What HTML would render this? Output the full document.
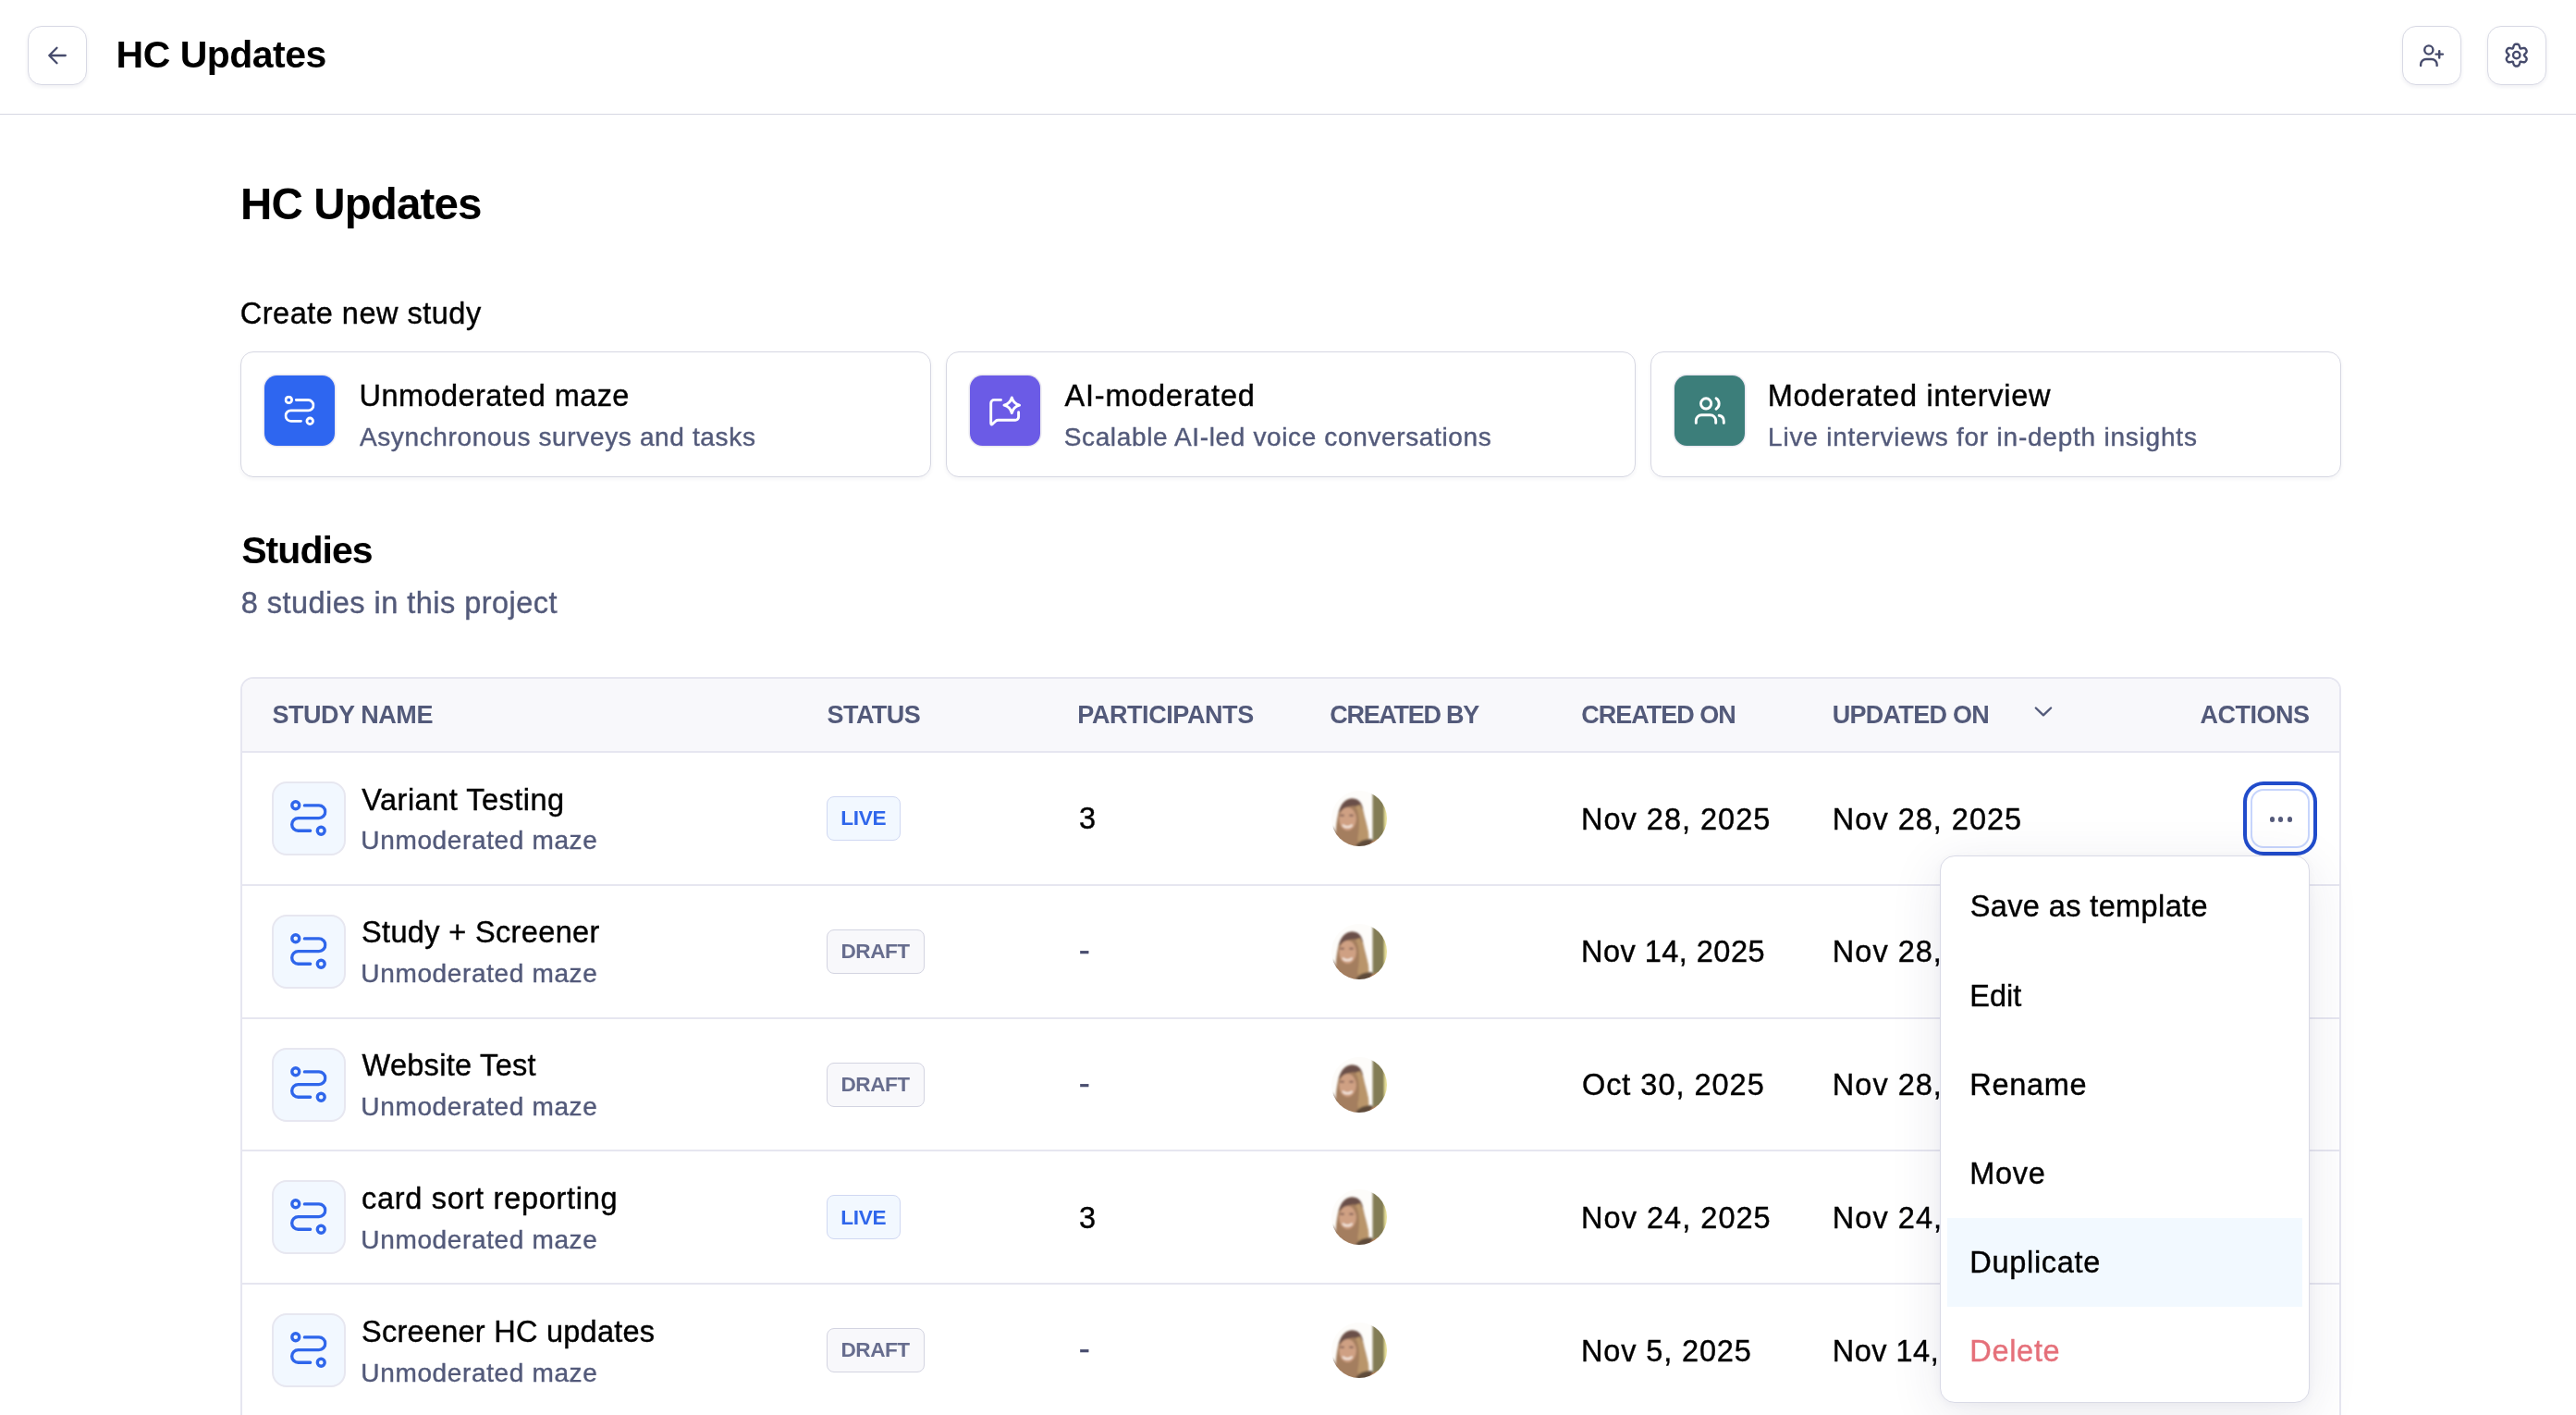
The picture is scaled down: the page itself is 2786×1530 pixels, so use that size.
<!DOCTYPE html>
<html lang="en">
<head>
<meta charset="utf-8">
<title>HC Updates</title>
<style>
*{box-sizing:border-box;margin:0;padding:0}
html,body{width:2786px;height:1530px;overflow:hidden;background:#fff}
body{font-family:"Liberation Sans",Arial,sans-serif;color:#000;position:relative}
#app{position:absolute;left:0;top:0;width:2786px;height:1530px;will-change:transform}
button{font:inherit;color:inherit;cursor:pointer}
.t{position:absolute;white-space:nowrap;line-height:1;display:block;font-weight:normal;-webkit-text-stroke:.4px}
.t.b{-webkit-text-stroke:0}
header{position:absolute;left:0;top:0;width:2786px;height:124px;border-bottom:1px solid #D6D7E3;background:#fff}
.ibtn{position:absolute;top:28px;width:64px;height:64px;border:1px solid #D8D9E4;border-radius:15px;background:#fff;box-shadow:0 2px 4px rgba(30,30,80,.07)}
.ibtn svg{position:absolute;left:-1px;top:-1px}
main{position:absolute;left:0;top:124px;width:2786px;height:1406px}
.card{position:absolute;top:256px;height:136px;border:1px solid #D6D7E2;border-radius:14px;background:#fff;box-shadow:0 2px 4px rgba(30,30,80,.05)}
.cico{position:absolute;left:25px;top:25px;width:76px;height:76px;border-radius:13.5px;box-shadow:0 0 0 1.5px #EAE8F0}
.cico svg{position:absolute;left:0;top:0}
.table{position:absolute;left:260px;top:608px;width:2272px;height:900px;border:2px solid #E6E6F0;border-radius:14px;background:#fff;overflow:hidden}
.thead{position:absolute;left:0;top:0;width:100%;height:80px;background:#F8F8FB;border-bottom:2px solid #E6E6F0}
.row{position:absolute;left:0;width:100%;border-bottom:2px solid #E6E6F0}
.sico{position:absolute;left:32px;top:31px;width:80px;height:80px;border-radius:16px;background:#F2F8FF;border:2px solid #E7E7F0}
.sico svg{position:absolute;left:18px;top:18.4px}
.badge{position:absolute;left:632px;top:47px;height:48px;border-radius:8px;border:1px solid #D3DAF0}
.badge.live{width:80px;background:#F2F8FF;border-color:#D0D8F2}
.badge.draft{width:106px;background:#F8F8FB;border-color:#D3D4E1}
.av{position:absolute;left:1178px;top:41px;width:60px;height:60px}
.menu{position:absolute;left:2098px;top:925px;width:400px;height:592px;border:1px solid #D9DAE6;border-radius:16px;background:#fff;box-shadow:0 12px 56px rgba(40,40,90,.10),0 2px 8px rgba(40,40,90,.04)}
.mi{position:absolute;left:7px;width:384px;height:96px}
.mi.hl{background:#F2F9FF}
.abtn{position:absolute;left:2434px;top:853px;width:64px;height:64px;border-radius:14px;border:2px solid #C7D5FC;background:#fff;box-shadow:0 0 0 4px #fff,0 0 0 8px #214CCB}
.abtn i{position:absolute;top:28.4px;width:5.2px;height:5.2px;border-radius:50%;background:#555A7A}
</style>
</head>
<body>
<div id="app">
<svg width="0" height="0" style="position:absolute">
<defs>
<symbol id="maze" viewBox="0 0 33 33">
<g fill="none" stroke="currentColor" stroke-width="2.8" stroke-linecap="round" stroke-linejoin="round">
<circle cx="4.8" cy="4.8" r="3.3"/>
<path d="M12.8 4.9H25.8A5.7 5.7 0 0 1 25.8 16.3H7.1A5.7 5.7 0 0 0 7.1 27.7H18"/>
<circle cx="27.7" cy="27.7" r="3.3"/>
</g>
</symbol>
<clipPath id="avc"><circle cx="30" cy="30" r="30"/></clipPath>
<filter id="bl" x="-10%" y="-10%" width="120%" height="120%"><feGaussianBlur stdDeviation="1.2"/></filter>
<symbol id="avatar" viewBox="0 0 60 60">
<g clip-path="url(#avc)">
<rect width="60" height="60" fill="#FDFCFA"/>
<g filter="url(#bl)">
<rect x="44.5" y="-2" width="12.5" height="64" fill="#827B55"/>
<rect x="57" y="-2" width="5" height="64" fill="#E6DF9A"/>
<path d="M6 64C3.5 52 4.5 38 7 26C9 15 15 8.5 22 8.5C30 8.5 33 15 34.5 22C36 30 38.5 36 39.5 44C40.5 52 40 58 38 64Z" fill="#A47E5E"/>
<path d="M8 24C10 13 16 8.5 22.5 8.5C29.5 8.5 33 13 34 20C28 14.5 17 15 8 24Z" fill="#6B5048"/>
<ellipse cx="17.5" cy="30.5" rx="9.3" ry="12.5" fill="#CFA083"/>
<ellipse cx="11.5" cy="26.8" rx="2.6" ry="1.3" fill="#7A5A50" opacity=".75"/>
<ellipse cx="21.5" cy="26.8" rx="2.6" ry="1.3" fill="#7A5A50" opacity=".75"/>
<path d="M26 17C31 26 30.5 38 28.5 50C27.5 58 33 63 39 60C41.5 52 40.5 44 38 38C35 30 35 22 31 15Z" fill="#B9956A"/>
<path d="M12 36.8C14.5 40 20 40 22.5 36.8" stroke="#F7ECE4" stroke-width="2" fill="none"/>
<path d="M1 38C5 46 7 54 10 64L1 64Z" fill="#6E5442"/>
<path d="M24 64C27 55 36 51.5 44 52.5L48 64Z" fill="#5E4C3B"/>
<path d="M41 60C44 53.5 50 51.5 58 53.5L58 64Z" fill="#C98A5E"/>
</g>
</g>
</symbol>
</defs>
</svg>
<header>
<button class="ibtn" style="left:30px" aria-label="Back"><svg width="64" height="64" viewBox="30 28 64 64" fill="none" stroke="#464B6C" stroke-width="2.3" stroke-linecap="round" stroke-linejoin="round"><path d="M70.8 60H53.3M61.5 51.7L53.3 60L61.5 68.3"/></svg></button>
<h2 class="t b" style="left:125.54px;top:39.40px;font-size:41px;font-weight:bold;letter-spacing:-0.505px;">HC Updates</h2>
<button class="ibtn" style="left:2598px" aria-label="Invite"><svg width="64" height="64" viewBox="2598 28 64 64" fill="none" stroke="#464B6C" stroke-width="2.4" stroke-linecap="round" stroke-linejoin="round"><circle cx="2626.8" cy="54" r="4.6"/><path d="M2618.1 70.9V69.8A5.8 5.8 0 0 1 2623.9 64H2629.8A5.8 5.8 0 0 1 2635.6 69.8V70.9"/><path d="M2634.5 58.6H2641.9M2638.2 55.1V62.5"/></svg></button>
<button class="ibtn" style="left:2690px" aria-label="Settings"><svg width="64" height="64" viewBox="2690 28 64 64" fill="none" stroke="#464B6C" stroke-width="2.4" stroke-linecap="round" stroke-linejoin="round"><circle cx="2721.7" cy="59.6" r="3.7"/><path d="M2729.8 59.6L2730.1 60.1L2730.7 60.8L2731.5 61.6L2732.2 62.4L2732.6 63.3L2732.6 64.1L2732.4 64.9L2732.0 65.6L2731.6 66.2L2731.1 66.8L2730.3 67.2L2729.4 67.3L2728.3 67.1L2727.2 66.8L2726.4 66.6L2725.8 66.6L2725.4 67.1L2725.2 68.0L2724.9 69.1L2724.5 70.1L2723.9 70.9L2723.2 71.3L2722.5 71.5L2721.7 71.5L2720.9 71.5L2720.2 71.3L2719.5 70.9L2718.9 70.1L2718.5 69.1L2718.2 68.0L2718.0 67.1L2717.6 66.6L2717.0 66.6L2716.2 66.8L2715.1 67.1L2714.0 67.3L2713.1 67.2L2712.3 66.8L2711.8 66.2L2711.4 65.6L2711.0 64.9L2710.8 64.1L2710.8 63.3L2711.2 62.4L2711.9 61.6L2712.7 60.8L2713.3 60.1L2713.6 59.6L2713.3 59.1L2712.7 58.4L2711.9 57.6L2711.2 56.8L2710.8 55.9L2710.8 55.1L2711.0 54.3L2711.4 53.6L2711.8 53.0L2712.3 52.4L2713.1 52.0L2714.0 51.9L2715.1 52.1L2716.2 52.4L2717.0 52.6L2717.6 52.6L2718.0 52.1L2718.2 51.2L2718.5 50.1L2718.9 49.1L2719.5 48.3L2720.2 47.9L2720.9 47.7L2721.7 47.7L2722.5 47.7L2723.2 47.9L2723.9 48.3L2724.5 49.1L2724.9 50.1L2725.2 51.2L2725.4 52.1L2725.8 52.6L2726.4 52.6L2727.2 52.4L2728.3 52.1L2729.4 51.9L2730.3 52.0L2731.1 52.4L2731.6 53.0L2732.0 53.6L2732.4 54.3L2732.6 55.1L2732.6 55.9L2732.2 56.8L2731.5 57.6L2730.7 58.4L2730.1 59.1Z"/></svg></button>
</header>
<main>
<h1 class="t b" style="left:259.93px;top:72.75px;font-size:47.5px;font-weight:bold;letter-spacing:-0.846px;">HC Updates</h1>
<section>
<h3 class="t" style="left:259.78px;top:199.25px;font-size:32.5px;letter-spacing:0.501px;">Create new study</h3>
<div class="card" style="left:260px;width:747px">
<div class="cico" style="background:#2E66F0"><svg width="76" height="76" style="color:#fff"><use href="#maze" x="21.5" y="21.6" width="33" height="33"/></svg></div>
<div class="t" style="left:127.57px;top:30.55px;font-size:32.5px;letter-spacing:0.428px;">Unmoderated maze</div>
<div class="t" style="left:127.90px;top:77.70px;font-size:28px;color:#535A7A;letter-spacing:0.644px;">Asynchronous surveys and tasks</div>
</div>
<div class="card" style="left:1023px;width:746px">
<div class="cico" style="background:#6B5BE6"><svg width="76" height="76" viewBox="1.4 1.7 76 76" fill="none" stroke="#fff" stroke-width="2.9" stroke-linecap="round" stroke-linejoin="round"><path d="M34.9 28.1H27.6A3.5 3.5 0 0 0 24.1 31.6V53.1Q24.1 55.6 26 54L29.3 50.9Q30.5 49.9 32 49.9H50.5A3.5 3.5 0 0 0 54 46.4V41.4"/><path d="M46.7 25.6Q48.5 32.1 55 33.9Q48.5 35.7 46.7 42.2Q44.9 35.7 38.4 33.9Q44.9 32.1 46.7 25.6Z"/></svg></div>
<div class="t" style="left:127.60px;top:30.55px;font-size:32.5px;letter-spacing:0.756px;">AI-moderated</div>
<div class="t" style="left:126.72px;top:77.70px;font-size:28px;color:#535A7A;letter-spacing:0.633px;">Scalable AI-led voice conversations</div>
</div>
<div class="card" style="left:1785px;width:747px">
<div class="cico" style="background:#3C7E7A"><svg width="76" height="76" viewBox="6 6 76 76" fill="none" stroke="#fff" stroke-width="2.9" stroke-linecap="round" stroke-linejoin="round"><circle cx="40.1" cy="36.4" r="5.6"/><path d="M51 30.8A6.7 6.7 0 0 1 51 42.2"/><path d="M29.3 57.4V54.8A6 6 0 0 1 35.3 48.8H44.7A6 6 0 0 1 50.7 54.8V57.4"/><path d="M54.2 49.3A6.2 6.2 0 0 1 59.3 55.2V57.4"/></svg></div>
<div class="t" style="left:125.76px;top:30.55px;font-size:32.5px;letter-spacing:0.733px;">Moderated interview</div>
<div class="t" style="left:126.11px;top:77.70px;font-size:28px;color:#535A7A;letter-spacing:0.778px;">Live interviews for in-depth insights</div>
</div>
</section>
<section>
<h2 class="t b" style="left:261.16px;top:451.10px;font-size:41px;font-weight:bold;letter-spacing:-0.930px;">Studies</h2>
<p class="t" style="left:260.78px;top:511.75px;font-size:32.5px;color:#535A7A;letter-spacing:0.463px;">8 studies in this project</p>
<div class="table">
<div class="thead">
<span class="t b" style="left:32.38px;top:25.60px;font-size:27px;font-weight:bold;color:#535A7A;letter-spacing:-0.441px;">STUDY NAME</span>
<span class="t b" style="left:632.58px;top:25.60px;font-size:27px;font-weight:bold;color:#535A7A;letter-spacing:-0.572px;">STATUS</span>
<span class="t b" style="left:903.31px;top:25.60px;font-size:27px;font-weight:bold;color:#535A7A;letter-spacing:-0.418px;">PARTICIPANTS</span>
<span class="t b" style="left:1176.16px;top:25.60px;font-size:27px;font-weight:bold;color:#535A7A;letter-spacing:-1.264px;">CREATED BY</span>
<span class="t b" style="left:1448.16px;top:25.60px;font-size:27px;font-weight:bold;color:#535A7A;letter-spacing:-0.986px;">CREATED ON</span>
<span class="t b" style="left:1719.73px;top:25.60px;font-size:27px;font-weight:bold;color:#535A7A;letter-spacing:-0.717px;">UPDATED ON</span>
<span class="t b" style="left:2117.38px;top:25.60px;font-size:27px;font-weight:bold;color:#535A7A;letter-spacing:-0.478px;">ACTIONS</span>
<svg class="t" style="left:1936px;top:28px" width="23" height="15" viewBox="2198 762 23 15" fill="none" stroke="#535A7A" stroke-width="2.4" stroke-linecap="round" stroke-linejoin="round"><path d="M2201.8 765.5L2209.95 773.3L2218.1 765.5"/></svg>
</div>
<div class="row" style="top:80px;height:144px">
<div class="sico"><svg width="39.6" height="39.6" style="color:#2F66EB"><use href="#maze" width="39.6" height="39.6"/></svg></div>
<div class="t" style="left:129.30px;top:34.65px;font-size:32.5px;letter-spacing:0.483px;">Variant Testing</div>
<div class="t" style="left:128.35px;top:81.40px;font-size:28px;color:#535A7A;letter-spacing:0.639px;">Unmoderated maze</div>
<span class="badge live">
<span class="t b" style="left:14.20px;top:12.20px;font-size:22.6px;font-weight:bold;color:#2F66EB;letter-spacing:-0.286px;">LIVE</span>
</span>
<span class="t" style="left:904.88px;top:55.45px;font-size:32.5px;">3</span>
<svg class="av" viewBox="0 0 60 60"><use href="#avatar" width="60" height="60"/></svg>
<span class="t" style="left:1448.06px;top:55.55px;font-size:32.5px;letter-spacing:0.993px;">Nov 28, 2025</span>
<span class="t" style="left:1719.86px;top:55.55px;font-size:32.5px;letter-spacing:0.993px;">Nov 28, 2025</span>
</div>
<div class="row" style="top:224px;height:144px">
<div class="sico"><svg width="39.6" height="39.6" style="color:#2F66EB"><use href="#maze" width="39.6" height="39.6"/></svg></div>
<div class="t" style="left:128.98px;top:34.45px;font-size:32.5px;letter-spacing:0.357px;">Study + Screener</div>
<div class="t" style="left:128.35px;top:81.20px;font-size:28px;color:#535A7A;letter-spacing:0.639px;">Unmoderated maze</div>
<span class="badge draft">
<span class="t b" style="left:14.50px;top:12.00px;font-size:22.6px;font-weight:bold;color:#676D8E;letter-spacing:-0.492px;">DRAFT</span>
</span>
<span class="t" style="left:904.78px;top:50.80px;font-size:36px;color:#4A4F70;">-</span>
<svg class="av" viewBox="0 0 60 60"><use href="#avatar" width="60" height="60"/></svg>
<span class="t" style="left:1448.06px;top:55.35px;font-size:32.5px;letter-spacing:0.466px;">Nov 14, 2025</span>
<span class="t" style="left:1719.86px;top:55.35px;font-size:32.5px;letter-spacing:0.993px;">Nov 28, 2025</span>
</div>
<div class="row" style="top:368px;height:143px">
<div class="sico"><svg width="39.6" height="39.6" style="color:#2F66EB"><use href="#maze" width="39.6" height="39.6"/></svg></div>
<div class="t" style="left:129.50px;top:34.25px;font-size:32.5px;letter-spacing:0.295px;">Website Test</div>
<div class="t" style="left:128.35px;top:81.00px;font-size:28px;color:#535A7A;letter-spacing:0.639px;">Unmoderated maze</div>
<span class="badge draft">
<span class="t b" style="left:14.50px;top:11.80px;font-size:22.6px;font-weight:bold;color:#676D8E;letter-spacing:-0.492px;">DRAFT</span>
</span>
<span class="t" style="left:904.78px;top:50.60px;font-size:36px;color:#4A4F70;">-</span>
<svg class="av" viewBox="0 0 60 60"><use href="#avatar" width="60" height="60"/></svg>
<span class="t" style="left:1448.88px;top:55.15px;font-size:32.5px;letter-spacing:0.977px;">Oct 30, 2025</span>
<span class="t" style="left:1719.86px;top:55.15px;font-size:32.5px;letter-spacing:0.993px;">Nov 28, 2025</span>
</div>
<div class="row" style="top:511px;height:144px">
<div class="sico"><svg width="39.6" height="39.6" style="color:#2F66EB"><use href="#maze" width="39.6" height="39.6"/></svg></div>
<div class="t" style="left:128.98px;top:35.05px;font-size:32.5px;letter-spacing:0.717px;">card sort reporting</div>
<div class="t" style="left:128.35px;top:81.80px;font-size:28px;color:#535A7A;letter-spacing:0.639px;">Unmoderated maze</div>
<span class="badge live">
<span class="t b" style="left:14.20px;top:12.60px;font-size:22.6px;font-weight:bold;color:#2F66EB;letter-spacing:-0.286px;">LIVE</span>
</span>
<span class="t" style="left:904.88px;top:55.85px;font-size:32.5px;">3</span>
<svg class="av" viewBox="0 0 60 60"><use href="#avatar" width="60" height="60"/></svg>
<span class="t" style="left:1448.06px;top:55.95px;font-size:32.5px;letter-spacing:1.029px;">Nov 24, 2025</span>
<span class="t" style="left:1719.86px;top:55.95px;font-size:32.5px;letter-spacing:1.029px;">Nov 24, 2025</span>
</div>
<div class="row" style="top:655px;height:144px">
<div class="sico"><svg width="39.6" height="39.6" style="color:#2F66EB"><use href="#maze" width="39.6" height="39.6"/></svg></div>
<div class="t" style="left:128.98px;top:34.85px;font-size:32.5px;letter-spacing:0.256px;">Screener HC updates</div>
<div class="t" style="left:128.35px;top:81.60px;font-size:28px;color:#535A7A;letter-spacing:0.639px;">Unmoderated maze</div>
<span class="badge draft">
<span class="t b" style="left:14.50px;top:12.40px;font-size:22.6px;font-weight:bold;color:#676D8E;letter-spacing:-0.492px;">DRAFT</span>
</span>
<span class="t" style="left:904.78px;top:51.20px;font-size:36px;color:#4A4F70;">-</span>
<svg class="av" viewBox="0 0 60 60"><use href="#avatar" width="60" height="60"/></svg>
<span class="t" style="left:1448.06px;top:55.75px;font-size:32.5px;letter-spacing:0.850px;">Nov 5, 2025</span>
<span class="t" style="left:1719.86px;top:55.75px;font-size:32.5px;letter-spacing:0.466px;">Nov 14, 2025</span>
</div>
</div>
</section>
</main>
<button class="abtn" aria-label="Actions"><i style="left:18.7px"></i><i style="left:28px"></i><i style="left:37.6px"></i></button>
<div class="menu" role="menu">
<div class="mi" role="menuitem" style="top:7px">
<span class="t" style="left:24.68px;top:31.35px;font-size:32.5px;letter-spacing:0.388px;">Save as template</span>
</div>
<div class="mi" role="menuitem" style="top:103px">
<span class="t" style="left:24.26px;top:31.50px;font-size:32.5px;letter-spacing:-0.025px;">Edit</span>
</div>
<div class="mi" role="menuitem" style="top:199px">
<span class="t" style="left:24.26px;top:31.65px;font-size:32.5px;letter-spacing:0.700px;">Rename</span>
</div>
<div class="mi" role="menuitem" style="top:295px">
<span class="t" style="left:24.26px;top:31.80px;font-size:32.5px;letter-spacing:0.700px;">Move</span>
</div>
<div class="mi hl" role="menuitem" style="top:391px">
<span class="t" style="left:24.26px;top:31.95px;font-size:32.5px;letter-spacing:0.700px;">Duplicate</span>
</div>
<div class="mi" role="menuitem" style="top:487px">
<span class="t" style="left:24.26px;top:32.10px;font-size:32.5px;color:#E5707A;letter-spacing:0.700px;">Delete</span>
</div>
</div>
</div>
</body></html>
